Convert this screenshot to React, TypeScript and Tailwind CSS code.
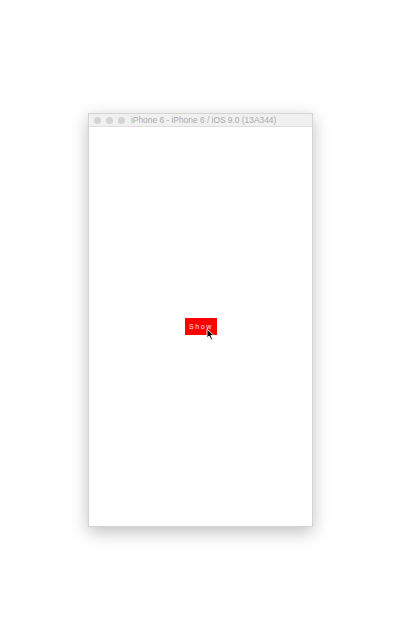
export default function App() {
  return (
    <div className="w-[400px] h-[640px] bg-white pt-[113px] pl-[88px]" style={{ fontFamily: '"Liberation Sans", Arial, sans-serif' }}>
      <div className="w-[225px] h-[414px] flex flex-col bg-white border border-[#d4d4d4] shadow-[0_5px_16px_rgba(0,0,0,0.25)]">
        <div className="h-[13px] flex items-center gap-[5px] pl-[5px] bg-[#f0f0f0] border-b border-[#dedede]">
          <span className="w-[7px] h-[7px] rounded-full bg-[#d4d4d4]" />
          <span className="w-[7px] h-[7px] rounded-full bg-[#d4d4d4]" />
          <span className="w-[7px] h-[7px] rounded-full bg-[#d4d4d4]" />
          <span className="ml-[1px] text-[8.4px] leading-none text-[#ababab] whitespace-nowrap">iPhone 6 - iPhone 6 / iOS 9.0 (13A344)</span>
        </div>
        <div className="flex-1 flex items-center justify-center">
          <div className="relative">
            <button className="w-[32px] h-[17px] bg-[#ff0000] text-[#ffe5e5] text-[7px] font-light tracking-[1.6px] leading-none flex items-center justify-center pl-[1px]">
              Show
            </button>
            <svg className="absolute left-[21px] top-[10px]" width="10" height="13" viewBox="0 0 10 13">
              <path d="M1 1 L1 10 L3.2 8 L5 12 L6.6 11.3 L4.9 7.5 L8 7.5 Z" fill="#000" stroke="#fff" strokeWidth="0.9" />
            </svg>
          </div>
        </div>
      </div>
    </div>
  );
}
